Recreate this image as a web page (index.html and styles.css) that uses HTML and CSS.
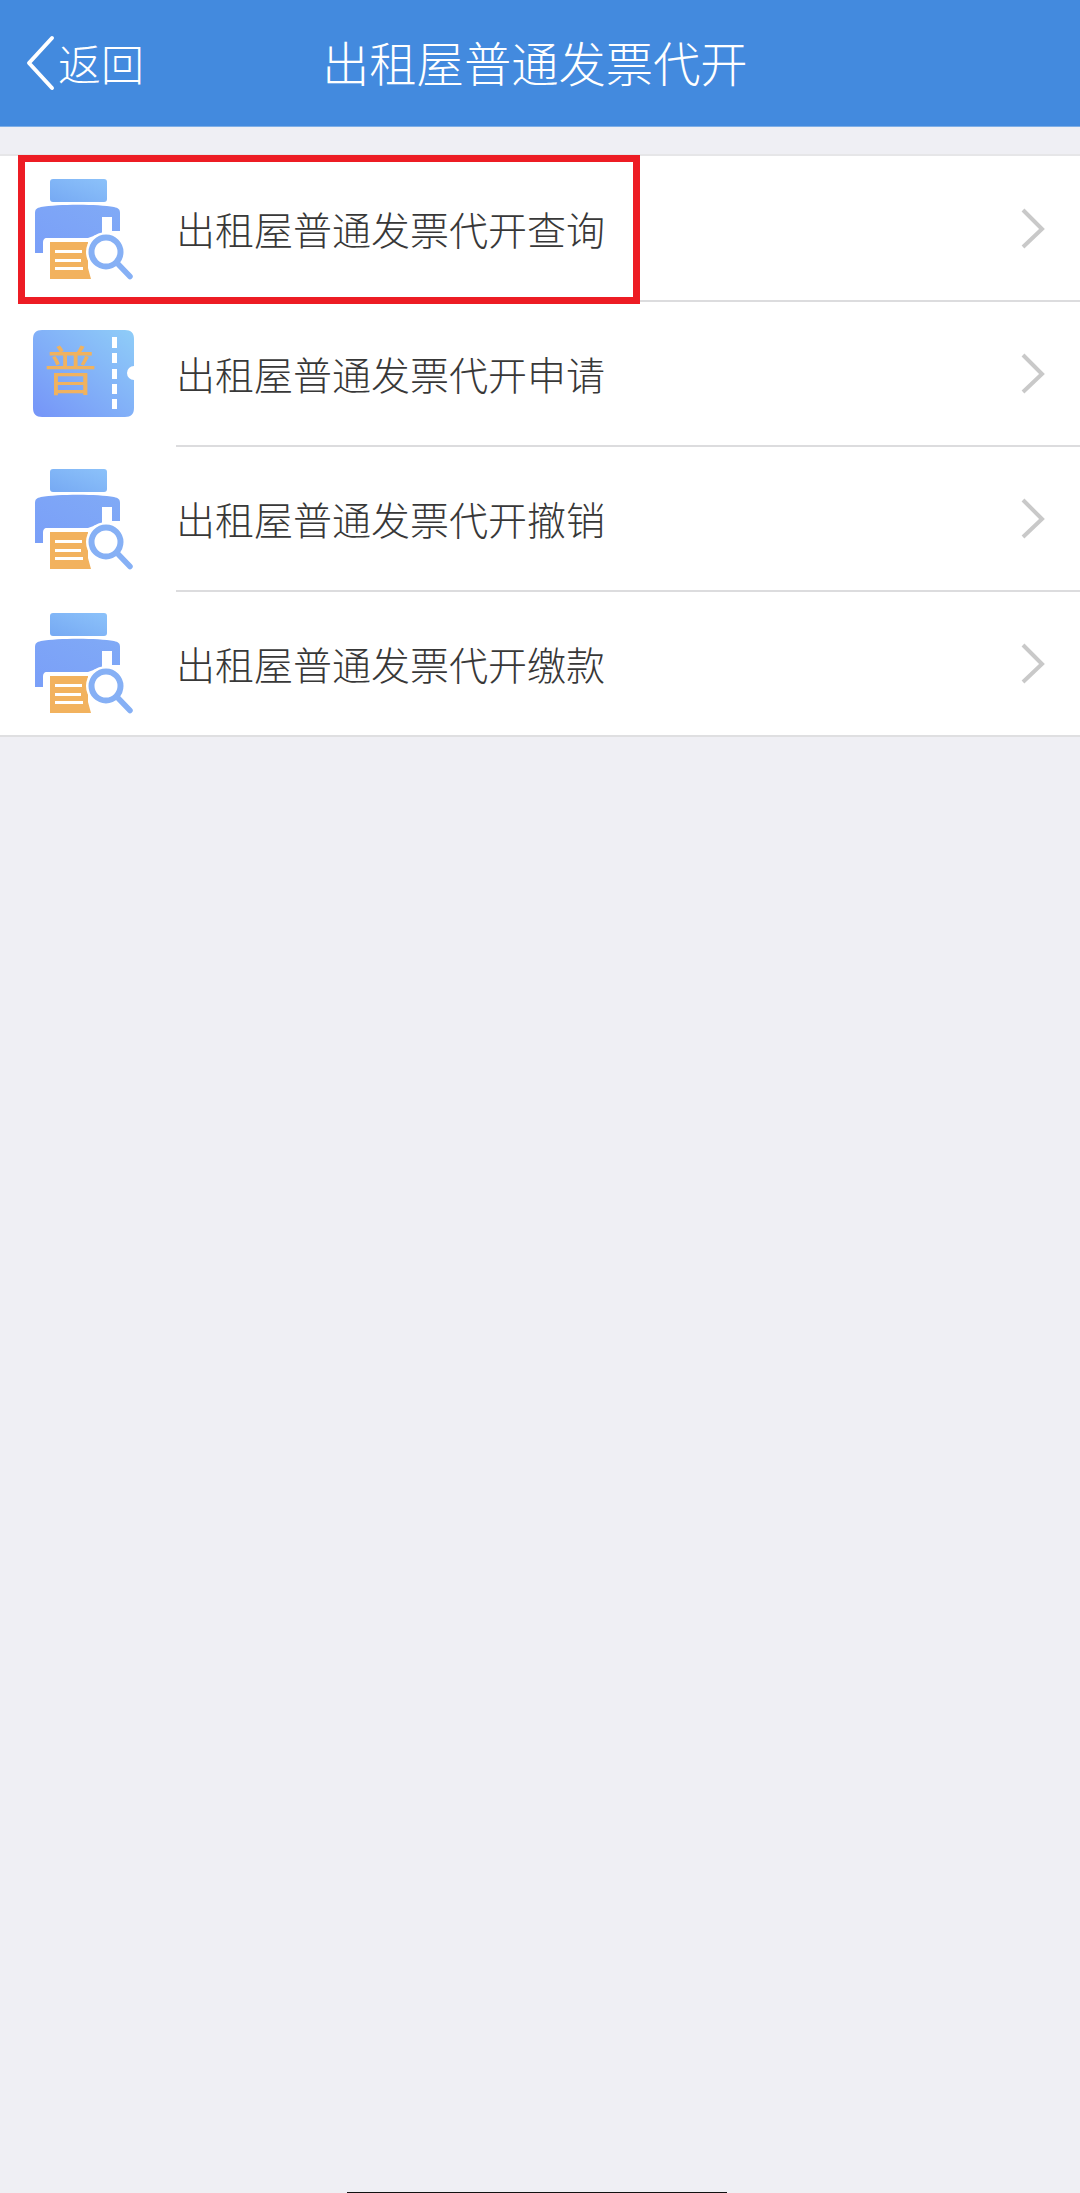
FILE: index.html
```html
<!DOCTYPE html>
<html lang="zh">
<head>
    <meta charset="UTF-8">
    <meta name="viewport" content="width=device-width, initial-scale=1.0">
    <title>出租屋普通发票代开</title>
    <link rel="stylesheet" href="styles.css">
</head>
<body>
    <svg class="defs" width="0" height="0">
        <defs>
            <linearGradient id="blueTop" x1="0" y1="1" x2="1" y2="0">
                <stop offset="0" stop-color="#76a9f3"/>
                <stop offset="1" stop-color="#8cc2fa"/>
            </linearGradient>
            <linearGradient id="blueBody" x1="0" y1="1" x2="1" y2="0">
                <stop offset="0" stop-color="#7a9ff8"/>
                <stop offset="1" stop-color="#80aaf6"/>
            </linearGradient>
            <linearGradient id="ticket" x1="0" y1="1" x2="1" y2="0">
                <stop offset="0" stop-color="#7594f8"/>
                <stop offset="1" stop-color="#8fcdf8"/>
            </linearGradient>
            <symbol id="printer" viewBox="0 0 110 110">
                <rect x="22" y="5" width="57" height="23" rx="3" fill="url(#blueTop)"/>
                <path d="M7 39c0-4 2-5 6-6 17-3 57-3 73 0 4 1 6 2 6 6v18h-8V43H74v16l-14 5H19c-3 0-4 2-4 5v10H7z" fill="url(#blueBody)"/>
                <path d="M22 68h38v26l3 11H22z" fill="#f2b25e"/>
                <circle cx="78" cy="78" r="20" fill="#fff"/>
                <path d="M27 76h27v3H27zM27 85h26v3H27zM27 93h28v3H27z" fill="#fff"/>
                <circle cx="78" cy="78" r="14.500" fill="#fff" stroke="#86b0f5" stroke-width="6"/>
                <path d="M90 90l12 12.500" fill="none" stroke="#86b0f5" stroke-width="5.500" stroke-linecap="round"/>
            </symbol>
            <symbol id="invoice" viewBox="0 0 110 110">
                <path d="M14 11h83c6 0 9 3 9 9v27a7 7 0 0 0 0 14v28c0 6-3 9-9 9H14c-6 0-9-3-9-9V20c0-6 3-9 9-9z" fill="url(#ticket)"/>
                <path d="M84 18h5v11h-5zM84 34h5v10h-5zM84 50h5v10h-5zM84 65h5v10h-5zM84 80h5v10h-5z" fill="#fff"/>
            </symbol>
        </defs>
    </svg>

    <div class="page">
        <header class="topbar">
            <div class="back">
                <svg class="back-icon" width="30" height="56" viewBox="0 0 30 56">
                    <path d="M26 3L3 28l23 25" fill="none" stroke="#fff" stroke-width="4" stroke-linecap="round" stroke-linejoin="round"/>
                </svg>
                <span class="back-text">返回</span>
            </div>
            <div class="title">出租屋普通发票代开</div>
        </header>

        <div class="list">
            <div class="row">
                <svg class="row-icon"><use href="#printer"/></svg>
                <div class="row-body">
                    <span class="row-text">出租屋普通发票代开查询</span>
                    <svg class="arrow" width="24" height="42" viewBox="0 0 24 42">
                        <path d="M2 2l19 19L2 39" fill="none" stroke="#c9c9c9" stroke-width="4"/>
                    </svg>
                </div>
                <div class="highlight"></div>
            </div>
            <div class="row">
                <div class="ticket-wrap">
                    <svg class="row-icon"><use href="#invoice"/></svg>
                    <span class="ticket-mark">普</span>
                </div>
                <div class="row-body">
                    <span class="row-text">出租屋普通发票代开申请</span>
                    <svg class="arrow" width="24" height="42" viewBox="0 0 24 42">
                        <path d="M2 2l19 19L2 39" fill="none" stroke="#c9c9c9" stroke-width="4"/>
                    </svg>
                </div>
            </div>
            <div class="row">
                <svg class="row-icon"><use href="#printer"/></svg>
                <div class="row-body">
                    <span class="row-text">出租屋普通发票代开撤销</span>
                    <svg class="arrow" width="24" height="42" viewBox="0 0 24 42">
                        <path d="M2 2l19 19L2 39" fill="none" stroke="#c9c9c9" stroke-width="4"/>
                    </svg>
                </div>
            </div>
            <div class="row">
                <svg class="row-icon"><use href="#printer"/></svg>
                <div class="row-body">
                    <span class="row-text">出租屋普通发票代开缴款</span>
                    <svg class="arrow" width="24" height="42" viewBox="0 0 24 42">
                        <path d="M2 2l19 19L2 39" fill="none" stroke="#c9c9c9" stroke-width="4"/>
                    </svg>
                </div>
            </div>
        </div>

        <div class="home-bar"></div>
    </div>
</body>
</html>
```

FILE: styles.css
```css
* {
    box-sizing: border-box;
}

body {
    margin: 0;
    padding: 0;
    font-family: "Noto Sans CJK SC", "Liberation Sans", sans-serif;
    background-color: #efeff4;
}

.defs {
    position: absolute;
}

.page {
    display: flex;
    flex-direction: column;
    height: 2193px;
    overflow: hidden;
}

/* Barra superior */
.topbar {
    display: flex;
    align-items: center;
    height: 127px;
    background-color: #438ade;
    border-bottom: 1px solid #7eaee6;
    color: #fff;
}

.back {
    display: flex;
    align-items: center;
    width: 322px;
    padding-left: 26px;
    font-size: 43px;
    font-weight: 300;
}

.back-icon {
    margin-right: 2px;
}

.back-text {
    margin-top: -3px;
}

.title {
    margin-top: -3px;
    font-size: 47.3px;
    font-weight: 300;
}

/* Lista */
.list {
    margin-top: 27px;
    background-color: #fff;
    border-top: 2px solid #e6e6e8;
    border-bottom: 2px solid #dfdfe1;
}

.row {
    position: relative;
    display: flex;
    align-items: center;
    height: 145px;
    padding-left: 28px;
}

.row:last-child {
    height: 144px;
}

.row-icon {
    display: block;
    flex: none;
    width: 110px;
    height: 110px;
}

.ticket-wrap {
    position: relative;
    flex: none;
    width: 110px;
    height: 110px;
}

.ticket-mark {
    position: absolute;
    left: 16px;
    top: 9px;
    font-size: 53px;
    line-height: 80px;
    color: #f0b25f;
}

.row-body {
    display: flex;
    align-items: center;
    justify-content: space-between;
    align-self: stretch;
    flex: 1;
    margin-left: 38px;
    margin-bottom: -1px;
    padding-right: 35px;
    border-bottom: 2px solid #dcdcde;
}

.row:last-child .row-body {
    margin-bottom: 0;
    border-bottom: none;
}

.row-text {
    font-size: 39px;
    font-weight: 300;
    color: #383838;
}

.arrow {
    margin-top: 2px;
}

.highlight {
    position: absolute;
    left: 18px;
    top: -1px;
    width: 622px;
    height: 149px;
    border: 7px solid #ed1c24;
}

.home-bar {
    width: 380px;
    height: 1px;
    margin: auto 0 0 347px;
    background-color: #111;
}
```
